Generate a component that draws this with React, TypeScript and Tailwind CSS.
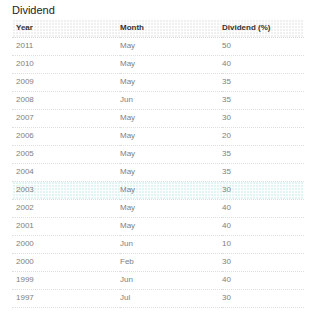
const rows: [string, string, string][] = [
  ["2011", "May", "50"],
  ["2010", "May", "40"],
  ["2009", "May", "35"],
  ["2008", "Jun", "35"],
  ["2007", "May", "30"],
  ["2006", "May", "20"],
  ["2005", "May", "35"],
  ["2004", "May", "35"],
  ["2003", "May", "30"],
  ["2002", "May", "40"],
  ["2001", "May", "40"],
  ["2000", "Jun", "10"],
  ["2000", "Feb", "30"],
  ["1999", "Jun", "40"],
  ["1997", "Jul", "30"],
];

const grid =
  "bg-[image:linear-gradient(to_right,rgba(255,255,255,0.9)_1px,transparent_1px),linear-gradient(to_bottom,rgba(255,255,255,0.9)_1px,transparent_1px)] bg-[length:3px_3px]";

export default function App() {
  return (
    <div className="h-[320px] w-[309px] bg-white pl-[12px] pr-[5px] pt-[4px] font-['Liberation_Sans',Arial,sans-serif]">
      <h2 className="text-[11px] leading-[13px] text-[#222]">Dividend</h2>
      <table className="mt-[2px] w-full border-collapse text-[8px]">
        <thead>
          <tr className={`h-[18px] bg-[#f0f0f0] ${grid} border-b border-dotted border-[#dadada]`}>
            <th className="w-[108px] pl-[4px] text-left font-bold text-[#333]">Year</th>
            <th className="w-[102px] text-left font-bold text-[#333]">Month</th>
            <th className="text-left font-bold text-[#333]">Dividend (%)</th>
          </tr>
        </thead>
        <tbody>
          {rows.map(([y, m, d], i) => (
            <tr
              key={i}
              className={`h-[18px] border-b border-dotted border-[#dedede] text-[#808080] ${
                y === "2003" ? `bg-[#e2f4f4] ${grid}` : ""
              }`}
            >
              <td className="pl-[4px]">{y}</td>
              <td>{m}</td>
              <td>{d}</td>
            </tr>
          ))}
        </tbody>
      </table>
    </div>
  );
}
